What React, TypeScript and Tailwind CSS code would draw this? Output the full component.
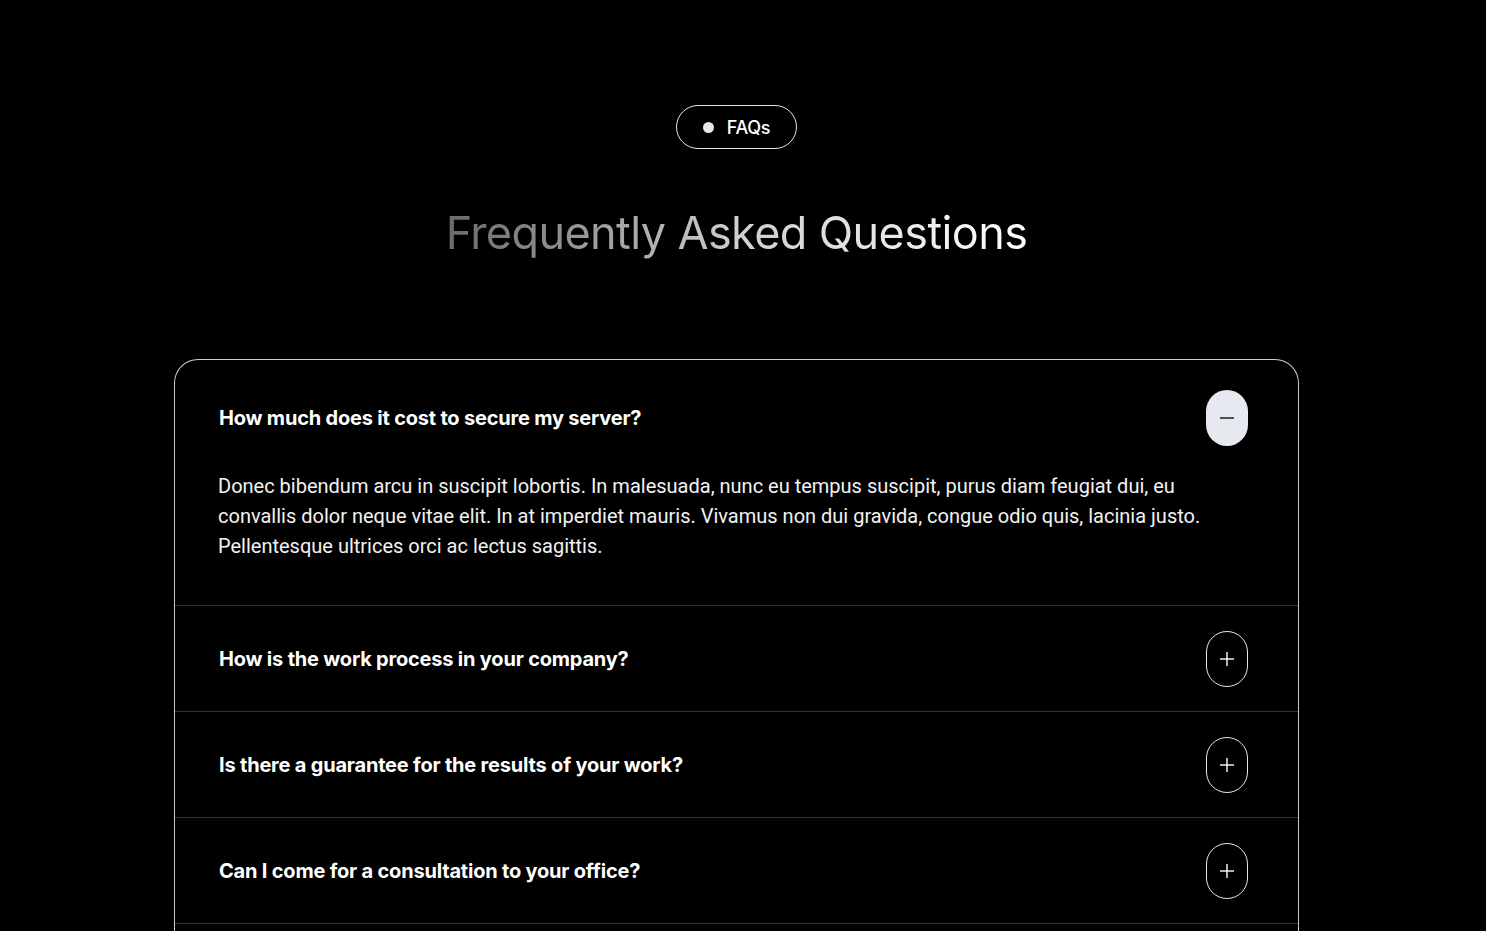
import { useState } from "react";

const faqs = [
  {
    q: "How much does it cost to secure my server?",
    a: "Donec bibendum arcu in suscipit lobortis. In malesuada, nunc eu tempus suscipit, purus diam feugiat dui, eu convallis dolor neque vitae elit. In at imperdiet mauris. Vivamus non dui gravida, congue odio quis, lacinia justo. Pellentesque ultrices orci ac lectus sagittis.",
  },
  {
    q: "How is the work process in your company?",
    a: "Donec bibendum arcu in suscipit lobortis. In malesuada, nunc eu tempus suscipit, purus diam feugiat dui.",
  },
  {
    q: "Is there a guarantee for the results of your work?",
    a: "Donec bibendum arcu in suscipit lobortis. In malesuada, nunc eu tempus suscipit, purus diam feugiat dui.",
  },
  {
    q: "Can I come for a consultation to your office?",
    a: "Donec bibendum arcu in suscipit lobortis. In malesuada, nunc eu tempus suscipit, purus diam feugiat dui.",
  },
  {
    q: "What kind of servers do you support?",
    a: "Donec bibendum arcu in suscipit lobortis.",
  },
];

function Toggle({ open }: { open: boolean }) {
  return (
    <span
      className={`flex h-[56px] w-[42px] shrink-0 items-center justify-center rounded-full ${
        open ? "bg-[#e6eaf0] text-[#111]" : "border border-white/90 text-white"
      }`}
    >
      <svg width="18" height="18" viewBox="0 0 18 18" fill="none" stroke="currentColor" strokeWidth="1.4">
        <path d="M2 9h14" />
        {!open && <path d="M9 2v14" />}
      </svg>
    </span>
  );
}

export default function App() {
  const [open, setOpen] = useState(0);

  return (
    <div className="h-[931px] overflow-hidden bg-black pr-[13px] text-white">
      <div className="flex flex-col items-center pt-[105px]">
        <div
          className="flex h-[44px] w-[121px] items-center justify-center gap-[13px] rounded-full border border-white/90 text-[18px] font-medium"
          style={{ fontFamily: "Inter, 'Noto Sans', sans-serif" }}
        >
          <span className="h-[11px] w-[11px] rounded-full bg-[#e5e7eb]" />
          <span className="tracking-[-0.3px]">FAQs</span>
        </div>

        <h2
          className="mt-[56px] bg-gradient-to-r from-[#6b6b6b] via-[#cfcfcf] to-white bg-clip-text text-[45px] font-normal leading-[56px] tracking-[-0.6px] text-transparent"
          style={{ fontFamily: "Inter, 'Noto Sans', sans-serif" }}
        >
          Frequently Asked Questions
        </h2>

        <div className="mt-[98px] w-[1125px] rounded-t-[24px] border border-b-0 border-white/80">
          {faqs.map((f, i) => {
            const isOpen = open === i;
            return (
              <div key={f.q} className={i > 0 ? "border-t border-[#333]" : ""}>
                <button
                  type="button"
                  onClick={() => setOpen(isOpen ? -1 : i)}
                  className={`flex w-full items-center justify-between pl-[44px] pr-[50px] text-left ${
                    i === 0 ? "pb-[25px] pt-[30px]" : "pb-[24px] pt-[25px]"
                  }`}
                >
                  <span
                    className="text-[20px] font-bold tracking-[-0.2px] text-white"
                    style={{ fontFamily: "Inter, 'Noto Sans', sans-serif" }}
                  >
                    {f.q}
                  </span>
                  <Toggle open={isOpen} />
                </button>
                {isOpen && (
                  <p
                    className="pb-[44px] pl-[43px] pr-[90px] text-[20px] leading-[30px] text-[#f2f2f2]"
                    style={{ fontFamily: "Roboto, 'Liberation Sans', sans-serif" }}
                  >
                    {f.a}
                  </p>
                )}
              </div>
            );
          })}
        </div>
      </div>
    </div>
  );
}
